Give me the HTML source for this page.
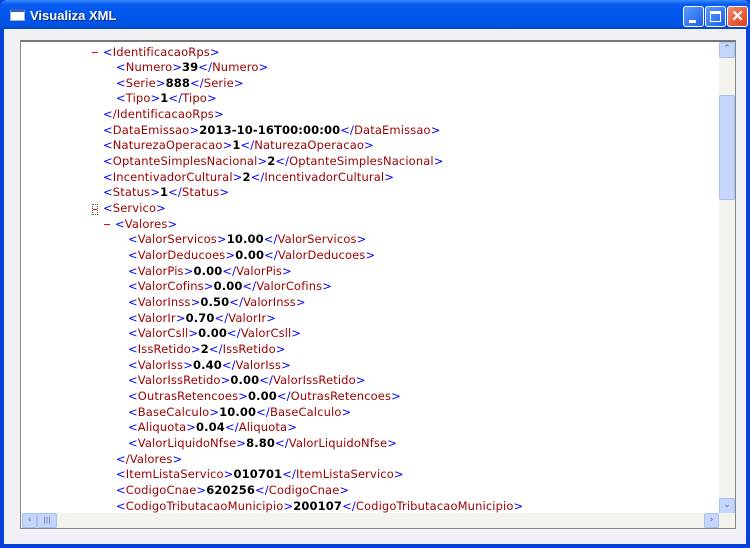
<!DOCTYPE html>
<html><head><style>
*{margin:0;padding:0;box-sizing:border-box}
body{width:750px;height:548px;overflow:hidden;background:#0a3fcf;font-family:"DejaVu Sans","Liberation Sans",sans-serif}
.win{position:absolute;left:0;top:0;width:750px;height:548px;background:#0842d8;border-radius:7px 7px 0 0}
.title{position:absolute;left:0;top:0;width:750px;height:30px;border-radius:7px 7px 0 0;background:linear-gradient(#3a8cff 0,#0a5cf0 4px,#0058ee 12px,#0055e5 24px,#0046c8 29px)}
.title span{position:absolute;left:30px;top:8px;color:#fff;font:bold 13px "Liberation Sans",sans-serif;text-shadow:1px 1px #0a2a80}
.ticon{position:absolute;left:10px;top:9px;width:15px;height:12px;background:#fff;border:1px solid #aac;border-top:3px solid #3060c0}
.btn{position:absolute;top:6px;width:21px;height:21px;border:1px solid #fff;border-radius:3px;background:linear-gradient(135deg,#5a9cff,#1d5ee8)}
.client{position:absolute;left:4px;top:29px;width:742px;height:515px;background:#f1f1f5}
.box{position:absolute;left:20px;top:40px;width:716px;height:489px;border:1px solid #888;border-top:2px solid #777;background:#fff;overflow:hidden}
.vs{position:absolute;right:0;top:0;width:16px;height:472px;background:#f4f3ee}
.hs{position:absolute;left:0;bottom:0;width:714px;height:15px;background:#f4f3ee}
.sb{position:absolute;background:#c5d6fc;border:1px solid #a8bff0;border-radius:2px;color:#4d6185;font-size:9px;text-align:center;line-height:13px}
.l{position:absolute;font-size:11.5px;letter-spacing:0.13px;white-space:nowrap;color:#990000;height:15px;line-height:15px}
.l b{color:#000}
.l i{font-style:normal;color:#00f}
.m{color:#f00;position:absolute}
</style></head><body>
<div class="win">
<div class="title"><div class="ticon"></div><span>Visualiza XML</span>
<div class="btn" style="left:683px"><div style="position:absolute;left:5px;top:13px;width:7px;height:3px;background:#fff"></div></div>
<div class="btn" style="left:705px"><div style="position:absolute;left:4px;top:4px;width:11px;height:11px;border:1px solid #fff;border-top:3px solid #fff"></div></div>
<div class="btn" style="left:727px;background:linear-gradient(135deg,#f08a6a,#d8401c);color:#fff;font:bold 15px 'Liberation Sans';text-align:center;line-height:19px">✕</div>
</div>
<div class="client"></div>
<div class="box">
<div class="vs">
<div class="sb" style="left:0;top:0;width:16px;height:16px">⌃</div>
<div class="sb" style="left:0;top:53px;width:16px;height:105px"></div>
<div class="sb" style="left:0;top:456px;width:16px;height:16px">⌄</div>
</div>
<div class="hs">
<div class="sb" style="left:1px;top:0;width:15px;height:15px">‹</div>
<div class="sb" style="left:16px;top:0;width:20px;height:15px;font-size:7px">|||</div>
<div class="sb" style="left:683px;top:0;width:15px;height:15px">›</div>
</div>
</div>
<div id="c"></div>
</div>
<script>
var L=[
[92,'-','IdentificacaoRps'],[116,0,'Numero','39'],[116,0,'Serie','888'],[116,0,'Tipo','1'],[103,0,'/IdentificacaoRps'],
[103,0,'DataEmissao','2013-10-16T00:00:00'],[103,0,'NaturezaOperacao','1'],[103,0,'OptanteSimplesNacional','2'],[103,0,'IncentivadorCultural','2'],[103,0,'Status','1'],
[92,'box','Servico'],[104,'-','Valores'],
[128,0,'ValorServicos','10.00'],[128,0,'ValorDeducoes','0.00'],[128,0,'ValorPis','0.00'],[128,0,'ValorCofins','0.00'],[128,0,'ValorInss','0.50'],[128,0,'ValorIr','0.70'],[128,0,'ValorCsll','0.00'],[128,0,'IssRetido','2'],[128,0,'ValorIss','0.40'],[128,0,'ValorIssRetido','0.00'],[128,0,'OutrasRetencoes','0.00'],[128,0,'BaseCalculo','10.00'],[128,0,'Aliquota','0.04'],[128,0,'ValorLiquidoNfse','8.80'],
[116,0,'/Valores'],[116,0,'ItemListaServico','010701'],[116,0,'CodigoCnae','620256'],[116,0,'CodigoTributacaoMunicipio','200107']];
var h='';
L.forEach(function(r,i){var y=44.5+i*15.66;var x=r[0];var s='';
if(r[1]=='-'){s+='<span class="m" style="left:0;top:7px;width:6px;height:1.5px;background:#f00"></span>';}
if(r[1]=='box'){s+='<span style="position:absolute;left:0;top:3px;width:6px;height:11px;border:1px dotted #555"><span style="position:absolute;left:0;top:4px;width:4px;height:1px;background:#f00"></span></span>';}
var off=(r[1]?11:0);
var t='<span style="position:absolute;left:'+off+'px"><i>&lt;</i>'+r[2]+'<i>&gt;</i>'+(r[3]!==undefined?'<b>'+r[3]+'</b><i>&lt;/</i>'+r[2]+'<i>&gt;</i>':'')+'</span>';
h+='<div class="l" style="left:'+x+'px;top:'+y+'px;width:600px">'+s+t+'</div>';});
document.getElementById('c').innerHTML=h;
</script>
</body></html>
